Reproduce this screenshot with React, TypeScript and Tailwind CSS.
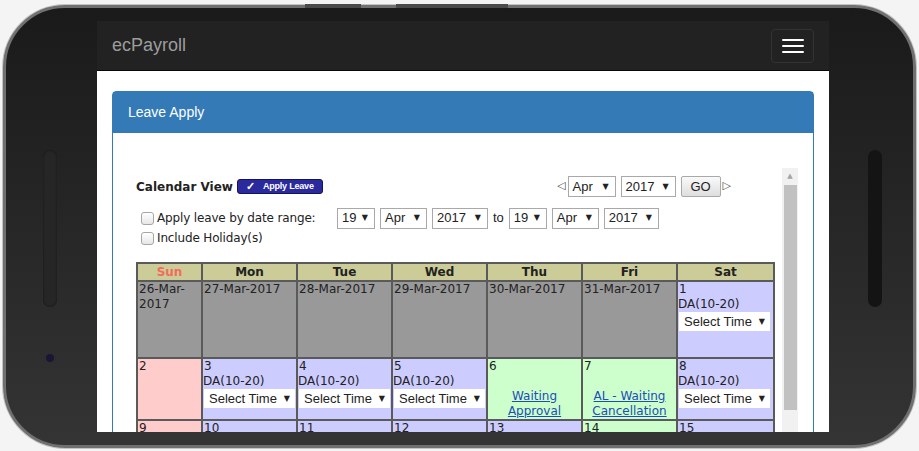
import React from 'react'

// ── Small pieces ──────────────────────────────────────────────────────────────

function DropBox({ label, w }: { label: string; w: string }) {
  return (
    <div
      className={`flex h-[21px] shrink-0 items-center justify-between border border-[#a9a9a9] bg-white pl-[4px] pr-[6px] font-['Liberation_Sans',Arial,sans-serif] text-[13px] text-[#222] ${w}`}
    >
      <span>{label}</span>
      <span className="font-['DejaVu_Sans',sans-serif] text-[8px] leading-none">▼</span>
    </div>
  )
}

function TimeSelect() {
  return (
    <div className="ml-[1px] flex h-[19px] w-[91px] items-center justify-between bg-white pl-[5px] pr-[5px] font-['Liberation_Sans',Arial,sans-serif] text-[13px] text-[#222]">
      <span>Select Time</span>
      <span className="font-['DejaVu_Sans',sans-serif] text-[8px] leading-none">▼</span>
    </div>
  )
}

function CheckBox() {
  return (
    <span className="inline-block h-[13px] w-[13px] shrink-0 rounded-[3px] border border-[#a6a6a6] bg-linear-to-b from-white to-[#e6e6e6]" />
  )
}

type Cell = {
  bg: string
  day: string
  da?: boolean
  link?: string
}

const ROW1: Cell[] = [
  { bg: 'bg-[#999999]', day: '26-Mar-2017' },
  { bg: 'bg-[#999999]', day: '27-Mar-2017' },
  { bg: 'bg-[#999999]', day: '28-Mar-2017' },
  { bg: 'bg-[#999999]', day: '29-Mar-2017' },
  { bg: 'bg-[#999999]', day: '30-Mar-2017' },
  { bg: 'bg-[#999999]', day: '31-Mar-2017' },
  { bg: 'bg-[#ccccff]', day: '1', da: true },
]

const ROW2: Cell[] = [
  { bg: 'bg-[#ffcccc]', day: '2' },
  { bg: 'bg-[#ccccff]', day: '3', da: true },
  { bg: 'bg-[#ccccff]', day: '4', da: true },
  { bg: 'bg-[#ccccff]', day: '5', da: true },
  { bg: 'bg-[#ccffcc]', day: '6', link: 'Waiting Approval' },
  { bg: 'bg-[#ccffcc]', day: '7', link: 'AL - Waiting Cancellation' },
  { bg: 'bg-[#ccccff]', day: '8', da: true },
]

const ROW3: Cell[] = [
  { bg: 'bg-[#ffcccc]', day: '9' },
  { bg: 'bg-[#ccccff]', day: '10' },
  { bg: 'bg-[#ccccff]', day: '11' },
  { bg: 'bg-[#ccccff]', day: '12' },
  { bg: 'bg-[#ccccff]', day: '13' },
  { bg: 'bg-[#ccffcc]', day: '14' },
  { bg: 'bg-[#ccccff]', day: '15' },
]

const DAYS = ['Sun', 'Mon', 'Tue', 'Wed', 'Thu', 'Fri', 'Sat']

function DayCell({ cell }: { cell: Cell }) {
  return (
    <td className={`border-2 border-[#5a5a5a] p-0 align-top ${cell.bg}`}>
      <div className="pl-[1px]">{cell.day}</div>
      {cell.da && (
        <>
          <div>DA(10-20)</div>
          <TimeSelect />
        </>
      )}
      {cell.link && (
        <div className="mt-[15px] text-center">
          <a href="#" className="text-[#1d4db5] underline">
            {cell.link}
          </a>
        </div>
      )}
    </td>
  )
}

// ── Calendar ──────────────────────────────────────────────────────────────────

function Calendar() {
  return (
    <table className="w-[637px] table-fixed border-collapse border-2 border-[#5a5a5a] text-[12px] leading-[15px] text-[#222]">
      <colgroup>
        <col className="w-[65px]" />
        <col className="w-[95px]" />
        <col className="w-[95px]" />
        <col className="w-[95px]" />
        <col className="w-[95px]" />
        <col className="w-[95px]" />
        <col className="w-[97px]" />
      </colgroup>
      <thead>
        <tr className="h-[18px]">
          {DAYS.map((d) => (
            <th
              key={d}
              className={`border-2 border-[#5a5a5a] bg-[#cccc99] p-0 text-center font-bold ${d === 'Sun' ? 'text-[#f26b5b]' : 'text-[#222]'}`}
            >
              {d}
            </th>
          ))}
        </tr>
      </thead>
      <tbody>
        <tr className="h-[77px]">
          {ROW1.map((c, i) => (
            <DayCell key={i} cell={c} />
          ))}
        </tr>
        <tr className="h-[61px]">
          {ROW2.map((c, i) => (
            <DayCell key={i} cell={c} />
          ))}
        </tr>
        <tr className="h-[61px]">
          {ROW3.map((c, i) => (
            <DayCell key={i} cell={c} />
          ))}
        </tr>
      </tbody>
    </table>
  )
}

// ── Page ──────────────────────────────────────────────────────────────────────

function Screen() {
  return (
    <div className="flex h-[411px] w-[732px] flex-col overflow-hidden bg-white">
      {/* navbar */}
      <div className="flex h-[50px] shrink-0 items-center justify-between border-b border-[#080808] bg-[#222] pl-[15px] pr-[15px]">
        <span className="font-['Liberation_Sans',Arial,sans-serif] text-[18px] text-[#9d9d9d]">ecPayroll</span>
        <div className="flex h-[34px] w-[43px] flex-col items-center justify-center gap-[4px] rounded-[4px] border border-[#333]">
          <span className="block h-[2px] w-[22px] rounded-[1px] bg-white" />
          <span className="block h-[2px] w-[22px] rounded-[1px] bg-white" />
          <span className="block h-[2px] w-[22px] rounded-[1px] bg-white" />
        </div>
      </div>

      {/* content */}
      <div className="px-[15px] pt-[20px]">
        <div className="rounded-t-[4px] border border-[#337ab7]">
          <div className="flex h-[41px] items-center bg-[#337ab7] px-[15px] font-['Liberation_Sans',Arial,sans-serif] text-[14px] text-white">
            Leave Apply
          </div>
          <div className="px-[15px] pt-[35px] font-['DejaVu_Sans',Verdana,sans-serif] text-[#222]">
            <div className="flex">
              <div className="flex-1 pl-[8px] pt-[8px]">
                {/* calendar view row */}
                <div className="flex h-[21px] items-center">
                  <span className="pt-[1px] text-[12px] font-bold">Calendar View</span>
                  <span className="ml-[4px] flex h-[15px] w-[86px] items-center rounded-[3px] border border-[#14145e] bg-[#2a2a9c] pl-[8px] font-['Liberation_Sans',Arial,sans-serif] text-[9px] font-bold text-white">
                    <span className="text-[11px] leading-none">✓</span>
                    <span className="ml-[8px] tracking-[-0.2px]">Apply Leave</span>
                  </span>
                  <div className="ml-auto mr-[51px] flex items-center">
                    <span className="mr-[2px] text-[11px] text-[#444]">◁</span>
                    <DropBox label="Apr" w="w-[48px]" />
                    <div className="ml-[5px]">
                      <DropBox label="2017" w="w-[55px]" />
                    </div>
                    <button className="ml-[5px] h-[21px] w-[40px] rounded-[2px] border border-[#a9a9a9] bg-linear-to-b from-[#fafafa] to-[#dedede] font-['Liberation_Sans',Arial,sans-serif] text-[13px] text-[#222]">
                      GO
                    </button>
                    <span className="ml-[2px] text-[11px] text-[#444]">▷</span>
                  </div>
                </div>

                {/* date range row */}
                <div className="mt-[10px] flex h-[22px] items-center">
                  <div className="flex w-[201px] items-center pl-[5px]">
                    <CheckBox />
                    <span className="ml-[3px] text-[12px] tracking-[-0.15px]">Apply leave by date range:</span>
                  </div>
                  <div className="flex items-center gap-[5px]">
                    <DropBox label="19" w="w-[38px]" />
                    <DropBox label="Apr" w="w-[47px]" />
                    <DropBox label="2017" w="w-[56px]" />
                    <span className="font-['Liberation_Sans',Arial,sans-serif] text-[13px]">to</span>
                    <DropBox label="19" w="w-[38px]" />
                    <DropBox label="Apr" w="w-[47px]" />
                    <DropBox label="2017" w="w-[55px]" />
                  </div>
                </div>
                <div className="flex h-[18px] items-center pl-[5px]">
                  <CheckBox />
                  <span className="ml-[3px] text-[12px] tracking-[-0.15px]">Include Holiday(s)</span>
                </div>

                <div className="mt-[15px]">
                  <Calendar />
                </div>
              </div>

              {/* scrollbar */}
              <div className="flex w-[16px] shrink-0 flex-col items-center bg-[#f1f1f1]">
                <div className="flex h-[17px] items-center justify-center text-[7px] leading-none text-[#a3a3a3]">▲</div>
                <div className="h-[225px] w-[13px] bg-[#c1c1c1]" />
              </div>
            </div>
          </div>
        </div>
      </div>
    </div>
  )
}

export default function App() {
  return (
    <div className="h-[451px] w-[919px] overflow-hidden bg-[#f4f4f4] pl-[3px] pt-[5px]">
      <div className="relative flex h-[443px] w-[913px] rounded-[62px] border-[3px] border-[#707070] bg-linear-to-b from-[#1a1a1a] to-[#343434] shadow-[0_0_0_1px_#c4c4c4]">
        {/* top edge buttons */}
        <span className="absolute left-[299px] top-[-4px] h-[4px] w-[56px] bg-[#4a4a4a]" />
        <span className="absolute left-[390px] top-[-4px] h-[4px] w-[112px] bg-[#4a4a4a]" />

        {/* left bezel */}
        <div className="flex w-[91px] shrink-0 flex-col pl-[37px] pt-[142px]">
          <div className="h-[157px] w-[14px] rounded-full bg-[#262626] shadow-[inset_0_0_2px_#111]" />
          <div className="ml-[3px] mt-[47px] h-[8px] w-[8px] rounded-full bg-[#1b1533] shadow-[0_0_0_2px_#2f2f2f]" />
        </div>

        <div className="py-[13px]">
          <Screen />
        </div>

        {/* right bezel */}
        <div className="flex-1 pl-[39px] pt-[142px]">
          <div className="h-[157px] w-[14px] rounded-full bg-[#141414]" />
        </div>
      </div>
    </div>
  )
}
